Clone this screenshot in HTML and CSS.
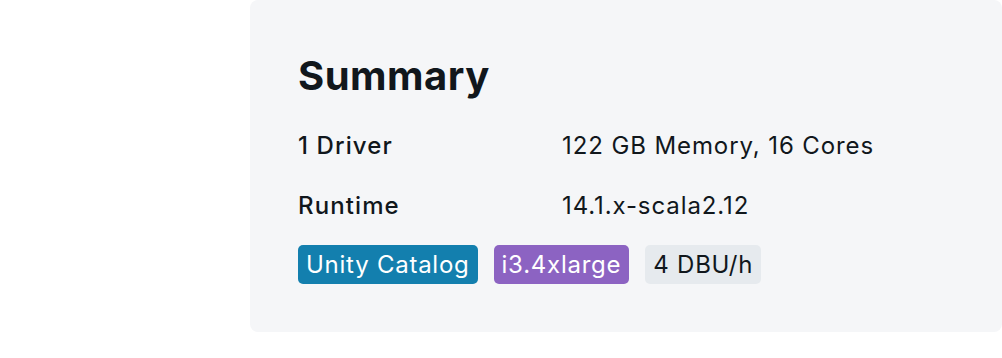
FILE: index.html
```
<!DOCTYPE html>
<html>
  <head>
    <title>Cluster Summary</title>
    <link rel="stylesheet" href="styles.css">
  </head>
  <body>
    <div id="container">
      <div id="summary">
        <h1>Summary</h1>
        <div class="details">
          <div class="label">1 Driver</div>
          <div class="value">122 GB Memory, 16 Cores</div>
          <div class="label">Runtime</div>
          <div class="value">14.1.x-scala2.12</div>
        </div>
        <div class="tags">
          <span class="tag tag-blue">Unity Catalog</span>
          <span class="tag tag-purple">i3.4xlarge</span>
          <span class="tag tag-gray">4 DBU/h</span>
        </div>
      </div>
    </div>
  </body>
</html>
```

FILE: styles.css
```
body {
  margin: 0;
  background-color: white;
  font-family: Inter, "Liberation Sans", sans-serif;
  color: #11171c;
}

#container {
  padding-left: 250px;
}

#summary {
  background-color: #f5f6f8;
  border-radius: 8px;
  padding: 48px;
  height: 236px;
}

h1 {
  margin: 0;
  font-size: 40px;
  line-height: 56px;
  font-weight: 700;
  letter-spacing: 0.5px;
}

.details {
  display: grid;
  grid-template-columns: 264px auto;
  row-gap: 20px;
  margin-top: 22px;
  font-size: 24px;
  line-height: 40px;
}

.label {
  font-weight: 500;
  letter-spacing: 1.1px;
}

.value {
  font-weight: 400;
  letter-spacing: 0.9px;
}

.tags {
  display: flex;
  gap: 16px;
  margin-top: 19px;
}

.tag {
  font-size: 24px;
  line-height: 39px;
  padding: 0 8px;
  border-radius: 5px;
  letter-spacing: 0.75px;
}

.tag-blue {
  background-color: #137fae;
  color: white;
}

.tag-purple {
  background-color: #8c63c2;
  color: white;
}

.tag-gray {
  background-color: #e6eaee;
}
```
